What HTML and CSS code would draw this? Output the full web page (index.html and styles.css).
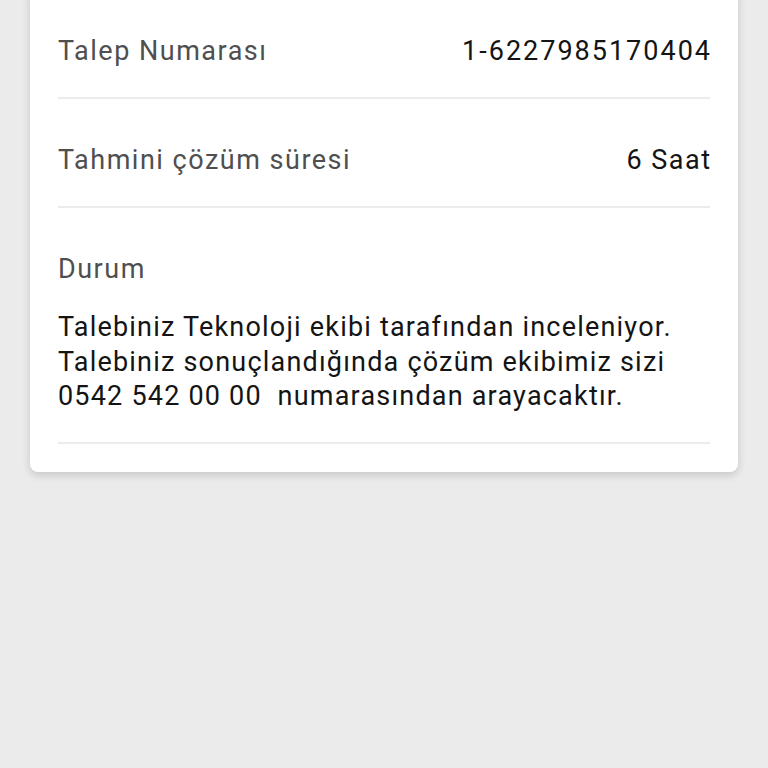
FILE: index.html
```html
<!DOCTYPE html>
<html>

<head>
    <title>Talep Detayı</title>
    <link rel="stylesheet" href="styles.css">
</head>

<body>
    <div class="card">
        <div class="row">
            <span class="label">Talep Numarası</span>
            <span class="value number">1-6227985170404</span>
        </div>
        <div class="row">
            <span class="label">Tahmini çözüm süresi</span>
            <span class="value">6 Saat</span>
        </div>
        <div class="row status">
            <span class="label">Durum</span>
            <p class="status-text">Talebiniz Teknoloji ekibi tarafından inceleniyor. Talebiniz sonuçlandığında çözüm ekibimiz sizi 0542 542 00 00&nbsp; numarasından arayacaktır.</p>
        </div>
    </div>
</body>

</html>
```

FILE: styles.css
```css
* {
    box-sizing: border-box;
}

body {
    margin: 0;
    padding: 0 30px;
    font-family: Roboto, "Noto Sans", sans-serif;
    background-color: #ebebeb;
    height: 768px;
    overflow: hidden;
}

.card {
    margin-top: -10px;
    background-color: white;
    border-radius: 0 0 8px 8px;
    padding: 0 28px 28px;
    box-shadow: 0 3px 8px rgba(0, 0, 0, 0.16);
}

.row {
    display: flex;
    justify-content: space-between;
    align-items: baseline;
    padding: 46px 0 31px;
    border-bottom: 2px solid #ececec;
    font-size: 27px;
    line-height: 30px;
    letter-spacing: 1.5px;
}

.label {
    color: #4f4f4f;
}

.value {
    color: #141414;
    margin-right: -1.5px;
}

.number {
    letter-spacing: 2px;
    margin-right: -2px;
}

.status {
    flex-direction: column;
    padding-bottom: 28px;
}

.status-text {
    margin: 26px 0 0;
    color: #141414;
    line-height: 34.5px;
    letter-spacing: 1.2px;
}
```
